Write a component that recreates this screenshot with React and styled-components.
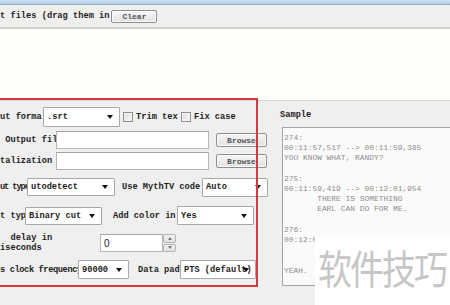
import styled, { createGlobalStyle } from 'styled-components';

const GlobalStyle = createGlobalStyle`
  html, body {
    margin: 0;
    width: 450px;
    height: 305px;
    overflow: hidden;
    background: #efefef;
  }
  body {
    font-family: "Liberation Mono", "DejaVu Sans Mono", monospace;
    font-size: 8.7px;
    color: #1e1e1e;
  }
`;

const Window = styled.div`
  width: 450px;
  height: 305px;
  display: flex;
  flex-direction: column;
  overflow: hidden;
`;

const TitleStrip = styled.div`
  height: 4px;
  background: linear-gradient(#cfe1f3, #b3cbe4);
  border-bottom: 1px solid #98aabd;
`;

const Toolbar = styled.div`
  height: 22px;
  display: flex;
  align-items: center;
  gap: 2px;
  background: #efefee;
  border-bottom: 2px solid #d4d0c8;
  font-weight: bold;
`;

const Button = styled.div`
  width: ${p => p.$w}px;
  height: ${p => p.$h}px;
  margin-left: ${p => p.$ml || 0}px;
  flex-shrink: 0;
  box-sizing: border-box;
  display: flex;
  align-items: center;
  justify-content: center;
  border: 1px solid #8e8e8e;
  border-radius: 2px;
  box-shadow: inset 0 0 0 1px #fbfbfb;
  background: linear-gradient(#f6f6f6, #e2e2e2);
  color: #555;
  font-size: 8px;
  font-weight: bold;
`;

const FileList = styled.div`
  height: 71px;
  background: #fcfff9;
`;

const Lower = styled.div`
  position: relative;
  flex: 1;
  display: flex;
  border-top: 1px solid #d8d8d6;
  background: #efefef;
`;

const Form = styled.div`
  width: 279px;
  flex-shrink: 0;
  display: flex;
  flex-direction: column;
  font-weight: bold;
`;

const Row = styled.div`
  display: flex;
  align-items: center;
  height: ${p => p.$h}px;
  margin-top: ${p => p.$mt}px;
`;

const Label = styled.div`
  width: ${p => p.$w}px;
  margin-left: ${p => p.$ml || 0}px;
  flex-shrink: 0;
  overflow: hidden;
  white-space: ${p => (p.$wrap ? 'pre' : 'nowrap')};
  letter-spacing: ${p => p.$ls || 0}px;
  line-height: 10px;
`;

const SelectBox = styled.div`
  position: relative;
  width: ${p => p.$w}px;
  height: ${p => p.$h || 19}px;
  margin-left: ${p => p.$ml || 0}px;
  flex-shrink: 0;
  box-sizing: border-box;
  display: flex;
  align-items: center;
  padding-left: 3px;
  background: #fff;
  border: 1px solid #a9a9a9;
  border-radius: 1px;
  white-space: nowrap;
  overflow: hidden;

  &::after {
    content: '';
    position: absolute;
    right: 6px;
    top: 50%;
    margin-top: -2px;
    border-left: 3.5px solid transparent;
    border-right: 3.5px solid transparent;
    border-top: 4px solid #111;
  }
`;

const Input = styled.div`
  width: ${p => p.$w}px;
  height: ${p => p.$h || 18}px;
  margin-left: ${p => p.$ml || 0}px;
  flex-shrink: 0;
  box-sizing: border-box;
  display: flex;
  align-items: center;
  padding-left: 3px;
  background: #fff;
  border: 1px solid #b4b6bb;
  border-top-color: #9fa2a8;
  font-weight: normal;
  font-family: "Liberation Sans", sans-serif;
  font-size: 10px;
`;

const Check = styled.div`
  width: 10px;
  height: 10px;
  margin-left: ${p => p.$ml || 0}px;
  flex-shrink: 0;
  box-sizing: border-box;
  border: 1px solid #8f8f8f;
  background: linear-gradient(135deg, #dcdcdc, #f8f8f8);
  box-shadow: inset 0 0 0 1px #f4f4f4;
`;

const Spinner = styled.div`
  width: 13px;
  height: 18px;
  flex-shrink: 0;
  display: flex;
  flex-direction: column;
  gap: 1px;
`;

const SpinHalf = styled.div`
  flex: 1;
  box-sizing: border-box;
  border: 1px solid #b5b5b5;
  border-radius: 2px;
  background: linear-gradient(#f4f4f4, #e0e0e0);
  display: flex;
  align-items: center;
  justify-content: center;

  &::after {
    content: '';
    border-left: 2.5px solid transparent;
    border-right: 2.5px solid transparent;
    ${p => (p.$up ? 'border-bottom: 3px solid #777;' : 'border-top: 3px solid #777;')}
  }
`;

const SamplePanel = styled.div`
  flex: 1;
  display: flex;
  flex-direction: column;
  padding-left: 1px;
  padding-top: 8px;
`;

const SampleTitle = styled.div`
  height: 12px;
  line-height: 12px;
  font-weight: bold;
  margin-bottom: 6px;
`;

const SampleBox = styled.div`
  width: 200px;
  height: 159px;
  margin-left: 2px;
  box-sizing: border-box;
  padding: 5px 0 0 1px;
  border: 1px solid #a5a5a5;
  border-right: none;
  background: #fafafa;
  color: #8d8d8d;
  font-size: 7.9px;
  line-height: 10.2px;
  white-space: pre;
  overflow: hidden;
`;

const Highlight = styled.div`
  position: absolute;
  left: -3px;
  top: -3px;
  width: 261px;
  height: 189px;
  box-sizing: border-box;
  border: 2px solid #d8373d;
  pointer-events: none;
`;

const Watermark = styled.div`
  position: absolute;
  left: 315px;
  top: 136px;
  right: 0;
  bottom: 0;
  background: #fff;
  padding: 9px 0 0 3px;
  font-family: "Noto Sans CJK SC", "Noto Sans", sans-serif;
  font-size: 34px;
  line-height: 36px;
  letter-spacing: -2px;
  color: #c6c6c6;
`;

const WatermarkText = styled.span`
  display: inline-block;
  transform: scaleY(1.18);
  transform-origin: top left;
`;

const Select = ({ w, h, ml, children }) => (
  <SelectBox $w={w} $h={h} $ml={ml}>{children}</SelectBox>
);

const sample = [
  '274:',
  '00:11:57,517 --> 00:11:59,385',
  'YOU KNOW WHAT, RANDY?',
  '',
  '275:',
  '00:11:59,419 --> 00:12:01,954',
  '       THERE IS SOMETHING',
  '       EARL CAN DO FOR ME.',
  '',
  '276:',
  '00:12:01,988 --> 00:12:03,700',
  '',
  '',
  'YEAH.',
];

export default function App() {
  return (
    <>
      <GlobalStyle />
      <Window>
        <TitleStrip />
        <Toolbar>
          <span>t files (drag them in</span>
          <Button $w={46} $h={13}>Clear</Button>
        </Toolbar>
        <FileList />
        <Lower>
          <Form>
            <Row $mt={6} $h={20}>
              <Label $w={43}>ut forma</Label>
              <Select w={77} h={20}>.srt</Select>
              <Check $ml={3} />
              <Label $w={42} $ml={3}>Trim tex</Label>
              <Check $ml={3} />
              <Label $w={60} $ml={3}>Fix case</Label>
            </Row>
            <Row $mt={4} $h={18}>
              <Label $w={56}>&nbsp;Output fil</Label>
              <Input $w={153} />
              <Button $w={51} $h={14} $ml={7}>Browse</Button>
            </Row>
            <Row $mt={3} $h={18}>
              <Label $w={56}>talization</Label>
              <Input $w={153} />
              <Button $w={51} $h={14} $ml={7}>Browse</Button>
            </Row>
            <Row $mt={8} $h={18}>
              <Label $w={27} $ls={-1.1}>ut type</Label>
              <Select w={88} h={18}>utodetect</Select>
              <Label $w={80} $ml={7}>Use MythTV code</Label>
              <Select w={66} h={19}>Auto</Select>
            </Row>
            <Row $mt={10} $h={19}>
              <Label $w={25}>t typ</Label>
              <Select w={77} h={18}>Binary cut</Select>
              <Label $w={64} $ml={11}>Add color in:</Label>
              <Select w={77} h={19}>Yes</Select>
            </Row>
            <Row $mt={8} $h={20}>
              <Label $w={100} $wrap>{'  delay in\niseconds'}</Label>
              <Input $w={63} $h={18}>0</Input>
              <Spinner>
                <SpinHalf $up />
                <SpinHalf />
              </Spinner>
            </Row>
            <Row $mt={7} $h={19}>
              <Label $w={78} $ls={-0.4}>s clock frequency</Label>
              <Select w={51} h={19}>90000</Select>
              <Label $w={42} $ml={9}>Data pad</Label>
              <Select w={76} h={19}>PTS (default)</Select>
            </Row>
          </Form>
          <SamplePanel>
            <SampleTitle>Sample</SampleTitle>
            <SampleBox>{sample.join('\n')}</SampleBox>
          </SamplePanel>
          <Highlight />
          <Watermark>
            <WatermarkText>软件技巧</WatermarkText>
          </Watermark>
        </Lower>
      </Window>
    </>
  );
}
